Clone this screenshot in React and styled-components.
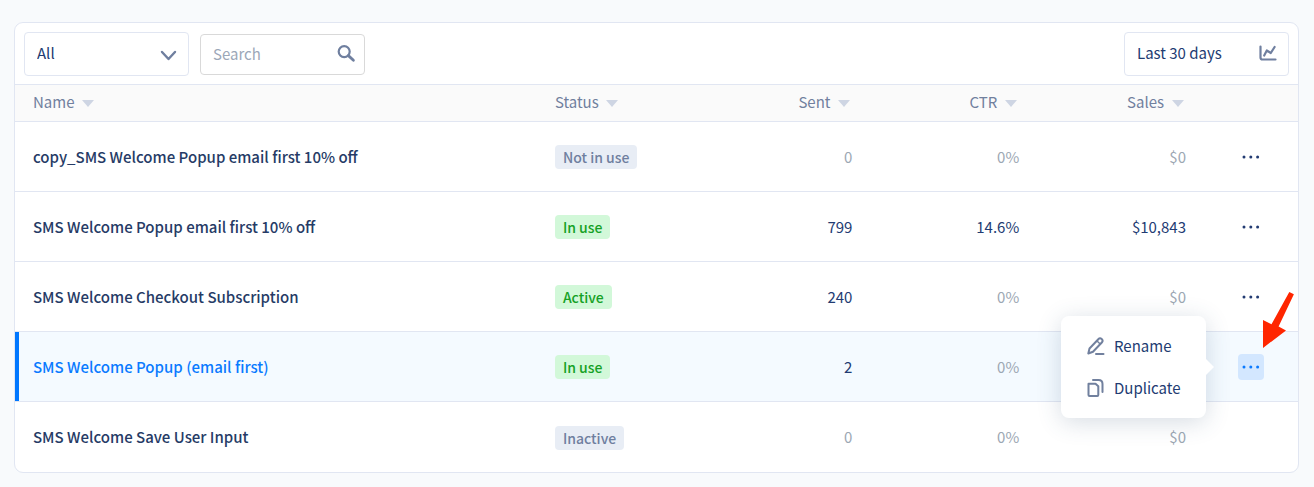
import React, { useState } from "react"
import styled, { createGlobalStyle } from 'styled-components'

const GlobalStyle = createGlobalStyle`
* {
  box-sizing: border-box;
}

body {
  margin: 0;
  background: #f8fafc;
  color: #223b72;
  font-family: "Noto Sans CJK SC", "Source Sans Pro", sans-serif;
  font-size: 15px;
  line-height: 24px;
}

button, input, select {
  font: inherit;
  color: inherit;
}
`

const Page = styled.main`
padding: 22px 15px 14px 14px;
`

const Card = styled.section`
background: #fff;
border: 1px solid #e1e6f2;
border-radius: 9px;
`

const Toolbar = styled.div`
display: flex;
align-items: center;
gap: 11px;
padding: 9px 9px 8px;
`

const Field = styled.div`
display: grid;
align-items: center;
width: 165px;

> * {
  grid-area: 1 / 1;
}

> svg {
  justify-self: end;
  margin-right: 8px;
  color: #6f7f9f;
  pointer-events: none;
}
`

const Select = styled.select`
appearance: none;
width: 100%;
height: 44px;
padding: 0 36px 2px 12px;
background: #fff;
border: 1px solid #e1e6f2;
border-radius: 4px;
`

const SearchInput = styled.input`
width: 100%;
height: 41px;
padding: 0 36px 2px 12px;
background: #fff;
border: 1px solid #d9d9d9;
border-radius: 4px;

&::placeholder {
  color: #9ca7b8;
  opacity: 1;
}
`

const DateButton = styled.button`
display: flex;
align-items: center;
justify-content: space-between;
width: 165px;
height: 44px;
margin-left: auto;
padding: 0 11px 2px 12px;
background: #fff;
border: 1px solid #e1e6f2;
border-radius: 4px;
cursor: pointer;

svg {
  color: #6f7f9f;
}
`

const Table = styled.table`
width: 100%;
table-layout: fixed;
border-collapse: separate;
border-spacing: 0;
`

const HeadCell = styled.th`
width: ${props => props.$width || 'auto'};
height: 38px;
padding: 0 18px 2px;
background: #fafafa;
border: solid #e1e6f2;
border-width: 1px 0;
font-weight: 400;
text-align: ${props => props.$right ? 'right' : 'left'};
`

const SortButton = styled.button`
display: inline-flex;
align-items: center;
gap: ${props => props.$right ? '8px' : '7px'};
padding: 0;
margin-right: ${props => props.$right ? '2px' : '0'};
background: none;
border: 0;
color: #71809e;
cursor: pointer;

&::after {
  content: "";
  margin-top: 3px;
  border: 6px solid transparent;
  border-top: 7px solid #ced5e3;
  border-bottom: 0;
}
`

const Row = styled.tr`
background: ${props => props.$selected ? '#f4faff' : 'transparent'};

td {
  height: 70px;
  padding: 0 18px;
  border-bottom: 1px solid #e1e6f2;
}

td:first-child {
  box-shadow: ${props => props.$selected ? 'inset 4px 0 #0077ff' : 'none'};
}

&:last-child td {
  border-bottom: 0;
}
`

const NameLink = styled.a`
color: ${props => props.$selected ? '#0a7aff' : '#263b66'};
font-weight: 500;
text-decoration: none;
`

const Badge = styled.span`
display: inline-block;
padding: 0 8px;
background: ${props => props.$green ? '#d2f8d9' : '#e8edf5'};
border-radius: 4px;
color: ${props => props.$green ? '#16a126' : '#6f7f9f'};
font-size: 14px;
font-weight: 500;
vertical-align: middle;
`

const NumberCell = styled.td`
color: ${props => props.$muted ? '#9ca7b3' : '#223b72'};
text-align: right;
`

const ActionsCell = styled.td`
text-align: center;
`

const Actions = styled.div`
display: inline-block;
position: relative;
vertical-align: middle;
`

const DotsButton = styled.button`
display: block;
width: 26px;
height: 26px;
padding: 0;
background: ${props => props.$open ? '#d3e7ff' : 'transparent'};
border: 0;
border-radius: 4px;
color: ${props => props.$open ? '#0a7aff' : '#223b72'};
cursor: pointer;

svg {
  display: block;
}
`

const Menu = styled.div`
position: absolute;
top: 50%;
right: 58px;
transform: translateY(-50%);
z-index: 1;
width: 145px;
padding: 9px 0;
background: #fff;
border-radius: 8px;
box-shadow: 0 4px 24px rgba(50, 80, 115, 0.2);

&::after {
  content: "";
  position: absolute;
  top: 50%;
  left: 100%;
  margin-top: -8px;
  border: 8px solid transparent;
  border-left-color: #fff;
  border-right: 0;
}
`

const MenuItem = styled.button`
display: flex;
align-items: center;
gap: 9px;
width: 100%;
height: 42px;
padding: 0 26px;
background: none;
border: 0;
cursor: pointer;

svg {
  flex: none;
  color: #71809e;
}
`

const Pointer = styled.svg`
position: absolute;
left: 24px;
bottom: 28px;
z-index: 1;
pointer-events: none;
`

const ChevronIcon = () => (
  <svg width="24" height="24" viewBox="0 0 24 24" fill="none" stroke="currentColor" strokeWidth="2.4" strokeLinecap="round" strokeLinejoin="round">
    <path d="M5 10l6.500 7L18 10" />
  </svg>
)

const SearchIcon = () => (
  <svg width="20" height="20" viewBox="0 0 20 20" fill="none" stroke="currentColor" strokeWidth="2.2" strokeLinecap="round">
    <circle cx="7.2" cy="7.6" r="5.5" />
    <path d="M11.4 11.6l5 4.600" strokeWidth="2.8" />
  </svg>
)

const ChartIcon = () => (
  <svg width="18" height="18" viewBox="0 0 18 18" fill="none" stroke="currentColor" strokeWidth="2.2" strokeLinecap="round" strokeLinejoin="round">
    <path d="M1.500 2.500v11q0 2 2 2h13" />
    <path d="M5.200 11.500l2.600-5 4 2.500 3.800-6" />
  </svg>
)

const DotsIcon = () => (
  <svg width="26" height="26" viewBox="0 0 26 26" fill="currentColor">
    <circle cx="6" cy="13" r="1.5" />
    <circle cx="12.8" cy="13" r="1.5" />
    <circle cx="19.600" cy="13" r="1.5" />
  </svg>
)

const PencilIcon = () => (
  <svg width="18" height="18" viewBox="0 0 18 18" fill="none" stroke="currentColor" strokeWidth="2" strokeLinecap="round" strokeLinejoin="round">
    <path d="M1.300 16.500l1.200-5L11.300 2.200a2.400 2.400 0 0 1 3.500 3.300L6 14.700z" />
    <path d="M10 4l3.200 3" strokeWidth="1.500" />
    <path d="M9 17h7.500" />
  </svg>
)

const CopyIcon = () => (
  <svg width="18" height="18" viewBox="0 0 18 18" fill="none" stroke="currentColor" strokeWidth="2" strokeLinecap="round" strokeLinejoin="round">
    <path d="M1.500 4.800H8.500l2.800 2.500v8.700q0 1-1 1H2.500q-1 0-1-1z" />
    <path d="M6 1h5.500q4 0 4 4v8" />
  </svg>
)

const columns = [
  { label: 'Name' },
  { label: 'Status', width: '13%' },
  { label: 'Sent', width: '13%', right: true },
  { label: 'CTR', width: '13%', right: true },
  { label: 'Sales', width: '13%', right: true },
]

const campaigns = [
  { name: 'copy_SMS Welcome Popup email first 10% off', status: 'Not in use', sent: '0', ctr: '0%', sales: '$0', actions: true },
  { name: 'SMS Welcome Popup email first 10% off', status: 'In use', sent: '799', ctr: '14.6%', sales: '$10,843', actions: true },
  { name: 'SMS Welcome Checkout Subscription', status: 'Active', sent: '240', ctr: '0%', sales: '$0', actions: true },
  { name: 'SMS Welcome Popup (email first)', status: 'In use', sent: '2', ctr: '0%', sales: '$0', actions: true },
  { name: 'SMS Welcome Save User Input', status: 'Inactive', sent: '0', ctr: '0%', sales: '$0', actions: false },
]

const isGreen = status => status === 'In use' || status === 'Active'
const isZero = value => ['0', '0%', '$0'].includes(value)

const CampaignRow = ({ campaign, open, onToggle }) => (
  <Row $selected={open}>
    <td><NameLink href="#" $selected={open}>{campaign.name}</NameLink></td>
    <td><Badge $green={isGreen(campaign.status)}>{campaign.status}</Badge></td>
    {[campaign.sent, campaign.ctr, campaign.sales].map((value, i) => (
      <NumberCell key={i} $muted={isZero(value)}>{value}</NumberCell>
    ))}
    <ActionsCell>
      {campaign.actions && (
        <Actions>
          <DotsButton type="button" aria-label="Actions" aria-expanded={open} $open={open} onClick={onToggle}>
            <DotsIcon />
          </DotsButton>
          {open && (
            <>
              <Menu>
                <MenuItem type="button"><PencilIcon />Rename</MenuItem>
                <MenuItem type="button"><CopyIcon />Duplicate</MenuItem>
              </Menu>
              <Pointer width="34" height="62" viewBox="0 0 34 62" fill="#ff2600" aria-hidden="true">
                <path d="M27.300 2l4.600 2.200-15.300 32.200 7.400 4L1 58V30l8.500 4.200z" />
              </Pointer>
            </>
          )}
        </Actions>
      )}
    </ActionsCell>
  </Row>
)

const App = () => {
  const [openRow, setOpenRow] = useState(3)

  return (
    <Page>
      <GlobalStyle />
      <Card>
        <Toolbar>
          <Field>
            <Select aria-label="Filter">
              <option>All</option>
              <option>In use</option>
              <option>Inactive</option>
            </Select>
            <ChevronIcon />
          </Field>
          <Field>
            <SearchInput type="search" placeholder="Search" aria-label="Search" />
            <SearchIcon />
          </Field>
          <DateButton type="button">Last 30 days<ChartIcon /></DateButton>
        </Toolbar>
        <Table>
          <thead>
            <tr>
              {columns.map(column => (
                <HeadCell key={column.label} $width={column.width} $right={column.right}>
                  <SortButton type="button" $right={column.right}>{column.label}</SortButton>
                </HeadCell>
              ))}
              <HeadCell $width="94px" aria-label="Actions" />
            </tr>
          </thead>
          <tbody>
            {campaigns.map((campaign, i) => (
              <CampaignRow
                key={campaign.name}
                campaign={campaign}
                open={openRow === i}
                onToggle={() => setOpenRow(openRow === i ? null : i)}
              />
            ))}
          </tbody>
        </Table>
      </Card>
    </Page>
  )
}

export default App
